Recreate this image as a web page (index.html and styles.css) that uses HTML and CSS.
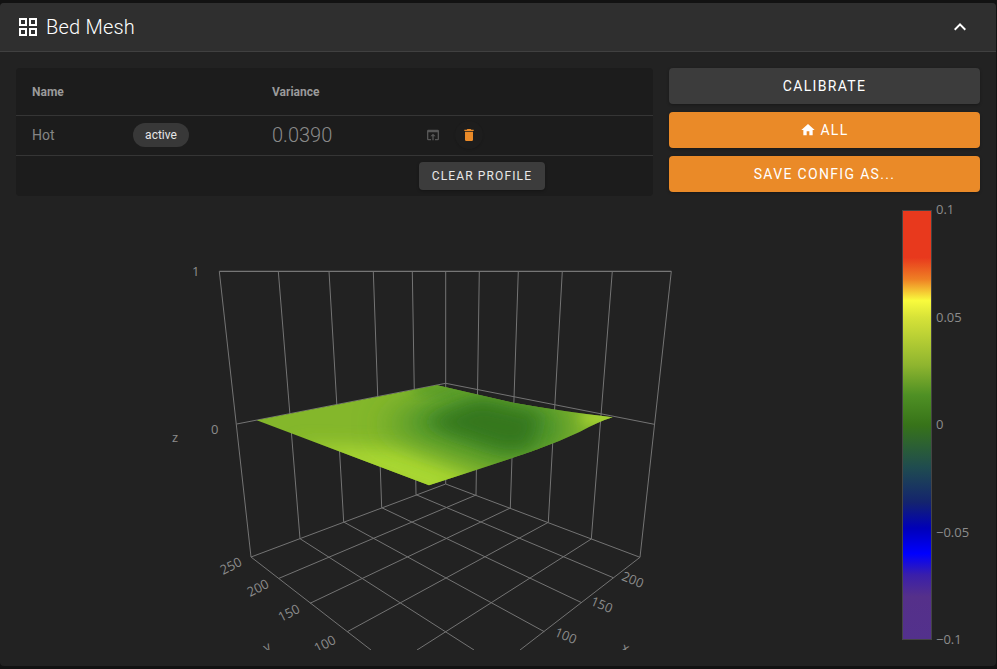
FILE: index.html
```html
<!DOCTYPE html>
<html>

    <head>
        <title>Bed Mesh</title>
        <meta charset="UTF-8">
        <meta name="viewport" content="width=device-width, initial-scale=1.0">
        <link rel="stylesheet" href="styles.css">
    </head>

    <body>
        <div class="panel">
            <div class="panelHeader">
                <svg class="icon24" viewBox="0 0 24 24"><path d="M3 11H11V3H3M5 5H9V9H5M13 21H21V13H13M15 15H19V19H15M3 21H11V13H3M5 15H9V19H5M13 3V11H21V3M19 9H15V5H19Z"/></svg>
                <span class="panelTitle">Bed Mesh</span>
                <svg class="icon24 collapse" viewBox="0 0 24 24"><path d="M7.41,15.41L12,10.83L16.59,15.41L18,14L12,8L6,14L7.41,15.41Z"/></svg>
            </div>

            <div class="panelBody">
                <div class="topRow">
                    <table class="profiles">
                        <colgroup>
                            <col class="colName">
                            <col class="colVariance">
                            <col>
                        </colgroup>
                        <thead>
                            <tr>
                                <th>Name</th>
                                <th>Variance</th>
                                <th></th>
                            </tr>
                        </thead>
                        <tbody>
                            <tr class="profileRow">
                                <td>
                                    <div class="nameCell">
                                        <span class="profileName">Hot</span>
                                        <span class="chip">active</span>
                                    </div>
                                </td>
                                <td class="variance">0.0390</td>
                                <td>
                                    <div class="actions">
                                        <span class="iconBtn">
                                            <svg class="icon16 dim" viewBox="0 0 24 24"><path d="M12,10L8,14H11V20H13V14H16M19,4H5C3.89,4 3,4.9 3,6V18A2,2 0 0,0 5,20H9V18H5V8H19V18H15V20H19A2,2 0 0,0 21,18V6A2,2 0 0,0 19,4Z"/></svg>
                                        </span>
                                        <span class="iconBtn raised">
                                            <svg class="icon16 accent" viewBox="0 0 24 24"><path d="M19,4H15.5L14.5,3H9.5L8.5,4H5V6H19M6,19A2,2 0 0,0 8,21H16A2,2 0 0,0 18,19V7H6V19Z"/></svg>
                                        </span>
                                    </div>
                                </td>
                            </tr>
                        </tbody>
                        <tfoot>
                            <tr>
                                <td class="footCell"></td>
                                <td class="footCell"></td>
                                <td class="footCell"><button class="btn small">Clear Profile</button></td>
                            </tr>
                        </tfoot>
                    </table>

                    <div class="commands">
                        <button class="btn">Calibrate</button>
                        <button class="btn orange">
                            <svg class="icon16" viewBox="0 0 24 24"><path d="M10,20V14H14V20H19V12H22L12,3L2,12H5V20H10Z"/></svg>
                            All
                        </button>
                        <button class="btn orange">Save Config As...</button>
                    </div>
                </div>

                <!-- viewBox uses page coordinates, the plot is cut off at y=650 -->
                <svg class="meshPlot" viewBox="16 196 964 454">
                    <defs>
                        <clipPath id="surfaceClip">
                            <path d="M256.7 420.3L437.3 385.3L513.3 402.7Q560 411 612.7 417.3Q600 421 580 431.7Q560 441 540 448.3Q520 456 429 485.3Z"/>
                        </clipPath>
                        <filter id="blur16" x="-50%" y="-50%" width="200%" height="200%"><feGaussianBlur stdDeviation="16"/></filter>
                        <filter id="blur9" x="-50%" y="-50%" width="200%" height="200%"><feGaussianBlur stdDeviation="9"/></filter>
                        <filter id="blur6" x="-50%" y="-50%" width="200%" height="200%"><feGaussianBlur stdDeviation="6"/></filter>
                        <linearGradient id="barFill" x1="0" y1="0" x2="0" y2="1">
                            <stop offset="0" stop-color="#e8391d"/>
                            <stop offset="0.11" stop-color="#e8391d"/>
                            <stop offset="0.16" stop-color="#ef7f24"/>
                            <stop offset="0.21" stop-color="#f9fb3d"/>
                            <stop offset="0.25" stop-color="#d6e238"/>
                            <stop offset="0.36" stop-color="#8fb52f"/>
                            <stop offset="0.43" stop-color="#4f9024"/>
                            <stop offset="0.5" stop-color="#377319"/>
                            <stop offset="0.6" stop-color="#1f4b50"/>
                            <stop offset="0.68" stop-color="#14246e"/>
                            <stop offset="0.74" stop-color="#0000b8"/>
                            <stop offset="0.8" stop-color="#0000ff"/>
                            <stop offset="0.85" stop-color="#3a1faa"/>
                            <stop offset="0.9" stop-color="#55308a"/>
                            <stop offset="1" stop-color="#53318c"/>
                        </linearGradient>
                    </defs>

                    <!-- back walls -->
                    <path class="gridTop" d="M219.3 271.3H671.3"/>
                    <path class="grid" d="M219.3 271.3L251 557M278.3 271.3L300 538.7M329 271.3L343.7 522M373.3 271.3L381.7 507.7M412.3 271.3L416 494.7M445.7 271.3V484M479.3 271.3L476 495M518.3 271.3L510.3 508M562.3 271.3L548.3 522.3M612.3 271.3L591.3 539M671.3 271.3L640 557.3"/>
                    <path class="grid" d="M236.7 424L445.7 383.3L654.3 424.3"/>

                    <!-- floor -->
                    <path class="grid" d="M251 557L371 650M300 538.7L474 650M343.7 522L544.3 631.7M381.7 507.7L581.7 602.7M416 494.7L613.3 577.7M445.7 484L640 557.3"/>
                    <path class="grid" d="M640 557.3L520 650M591.3 539L417 650M548.3 522.3L347.3 631.7M510.3 508L310 603.3M476 495L279 578.3M445.7 484L251 557"/>

                    <!-- surface -->
                    <g clip-path="url(#surfaceClip)">
                        <rect x="240" y="370" width="390" height="130" fill="#84b72b"/>
                        <path d="M295 445L429 498L485 480L400 448Z" fill="#aad831" filter="url(#blur9)"/>
                        <ellipse cx="437" cy="390" rx="26" ry="6" fill="#5fa028" filter="url(#blur6)"/>
                        <path d="M380 425L465 385L565 403L570 448L505 468L440 446Z" fill="#47902a" filter="url(#blur16)"/>
                        <path d="M425 422L480 400L540 414L530 448L505 450L455 434Z" fill="#35771b" filter="url(#blur9)"/>
                        <ellipse cx="602" cy="418" rx="22" ry="7" fill="#a8d434" filter="url(#blur6)"/>
                    </g>

                    <!-- axis labels -->
                    <text class="tick" x="192" y="276">1</text>
                    <text class="tick" x="211" y="434">0</text>
                    <text class="tick" x="172" y="442">z</text>
                    <text class="tick" text-anchor="middle" transform="translate(233 570) rotate(-27)">250</text>
                    <text class="tick" text-anchor="middle" transform="translate(260 592) rotate(-27)">200</text>
                    <text class="tick" text-anchor="middle" transform="translate(291 617) rotate(-27)">150</text>
                    <text class="tick" text-anchor="middle" transform="translate(327 648) rotate(-27)">100</text>
                    <text class="tick" text-anchor="middle" transform="translate(269 651) rotate(-27)">y</text>
                    <text class="tick" text-anchor="middle" transform="translate(631 584) rotate(22)">200</text>
                    <text class="tick" text-anchor="middle" transform="translate(600 609) rotate(22)">150</text>
                    <text class="tick" text-anchor="middle" transform="translate(564 640) rotate(22)">100</text>
                    <text class="tick" text-anchor="middle" transform="translate(624 652) rotate(22)">x</text>

                    <!-- colour bar -->
                    <rect class="colorBar" x="902.5" y="210.5" width="29" height="429" fill="url(#barFill)"/>
                    <text class="tick" x="936" y="214">0.1</text>
                    <text class="tick" x="936" y="322">0.05</text>
                    <text class="tick" x="936" y="429">0</text>
                    <text class="tick" x="936" y="537">−0.05</text>
                    <text class="tick" x="936" y="644">−0.1</text>
                </svg>
            </div>
        </div>
    </body>

</html>
```

FILE: styles.css
```css
* {
    margin: 0;
    padding: 0;
    box-sizing: border-box;
}

html,
body {
    height: 100%;
}

body {
    padding: 3px 1px 3px 0;
    background: #121212;
    font-family: Roboto, sans-serif;
    color: #fff;
}

.panel {
    height: 100%;
    background: #222222;
    border-radius: 4px;
    overflow: hidden;
}

.panelHeader {
    display: flex;
    align-items: center;
    height: 49px;
    padding: 0 24px 1px 16px;
    background: #2f2f2f;
    border-bottom: 1px solid #404040;
}

.panelTitle {
    margin-left: 6px;
    font-size: 20px;
    font-weight: 300;
    letter-spacing: 0.2px;
}

.collapse {
    margin-left: auto;
}

.icon24 {
    width: 24px;
    height: 24px;
    fill: #fff;
}

.icon16 {
    width: 16px;
    height: 16px;
    fill: #fff;
}

.icon16.dim {
    fill: #565656;
}

.icon16.accent {
    fill: #ea8a28;
}

.panelBody {
    padding: 16px 16px 16px;
}

.topRow {
    display: grid;
    grid-template-columns: 637px 311px;
    column-gap: 16px;
}

/* table */
.profiles {
    width: 637px;
    height: 128px;
    table-layout: fixed;
    border-collapse: collapse;
    background: #1c1c1c;
    border-radius: 4px;
}

.colName {
    width: 240px;
}

.colVariance {
    width: 147px;
}

.profiles th {
    height: 47px;
    padding: 1px 16px 0;
    font-size: 12px;
    font-weight: 700;
    text-align: left;
    color: #9a9a9a;
    border-bottom: 1px solid #353535;
}

.profileRow td {
    height: 39px;
    padding: 0 16px;
    border-bottom: 1px solid #353535;
}

.nameCell {
    display: flex;
    align-items: center;
}

.profileName {
    width: 101px;
    font-size: 14px;
    font-weight: 400;
    color: #858585;
}

.chip {
    display: flex;
    align-items: center;
    justify-content: center;
    width: 56px;
    height: 24px;
    border-radius: 12px;
    background: #383838;
    font-size: 12px;
    color: #e6e6e6;
}

.variance {
    font-size: 20px;
    font-weight: 300;
    color: #8a8a8a;
}

.actions {
    display: flex;
    gap: 8px;
}

.iconBtn {
    display: flex;
    align-items: center;
    justify-content: center;
    width: 28px;
    height: 28px;
    border-radius: 50%;
}

.iconBtn.raised {
    background: #1d1d1d;
    box-shadow: 0 1px 2px rgba(0, 0, 0, 0.12);
}

.footCell {
    height: 41px;
    padding: 0 16px;
}

/* buttons */
.commands {
    display: flex;
    flex-direction: column;
    gap: 8px;
}

.btn {
    display: flex;
    align-items: center;
    justify-content: center;
    gap: 4px;
    height: 36px;
    border: 0;
    border-radius: 4px;
    background: #3c3c3c;
    color: #fff;
    font-family: Roboto, sans-serif;
    font-size: 14px;
    font-weight: 400;
    letter-spacing: 1.33px;
    text-transform: uppercase;
    box-shadow: 0 1px 3px rgba(0, 0, 0, 0.3);
}

.btn.orange {
    background: #ea8a28;
}

.btn.small {
    width: 126px;
    height: 28px;
    font-size: 12px;
    letter-spacing: 1.12px;
    color: #e8e8e8;
}

/* plot */
.meshPlot {
    display: block;
    width: 964px;
    height: 454px;
}

.grid,
.gridTop {
    fill: none;
    stroke: #747474;
    stroke-width: 1;
}

.gridTop {
    stroke: #8c8c8c;
}

.tick {
    font-family: "Open Sans", sans-serif;
    font-size: 13px;
    fill: #8c8c8c;
}

.colorBar {
    stroke: #444444;
    stroke-width: 1;
}
```
